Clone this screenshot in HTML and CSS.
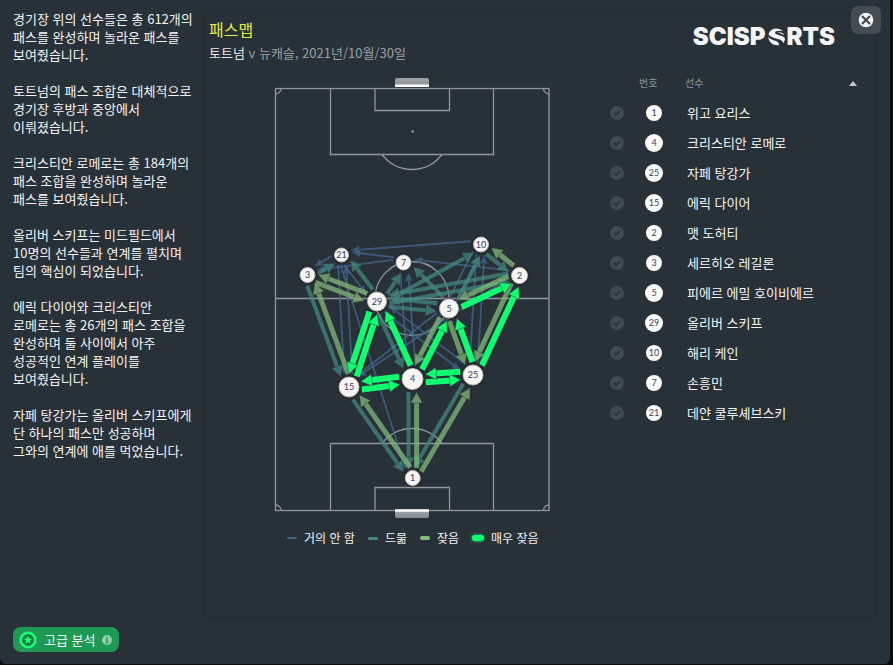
FILE: index.html
```
<!DOCTYPE html>
<html lang="ko">
<head>
<meta charset="UTF-8" />
<meta name="viewport" content="width=device-width, initial-scale=1.0" />
<title>패스맵</title>
<link rel="stylesheet" href="styles.css">
</head>
<body>
<div class="dialog">
    <aside class="sidebar">
        <div class="notes">
            <p>경기장 위의 선수들은 총 612개의<br>패스를 완성하며 놀라운 패스를<br>보여줬습니다.</p>
            <p>토트넘의 패스 조합은 대체적으로<br>경기장 후방과 중앙에서<br>이뤄졌습니다.</p>
            <p>크리스티안 로메로는 총 184개의<br>패스 조합을 완성하며 놀라운<br>패스를 보여줬습니다.</p>
            <p>올리버 스키프는 미드필드에서<br>10명의 선수들과 연계를 펼치며<br>팀의 핵심이 되었습니다.</p>
            <p>에릭 다이어와 크리스티안<br>로메로는 총 26개의 패스 조합을<br>완성하며 둘 사이에서 아주<br>성공적인 연계 플레이를<br>보여줬습니다.</p>
            <p>자페 탕강가는 올리버 스키프에게<br>단 하나의 패스만 성공하며<br>그와의 연계에 애를 먹었습니다.</p>
        </div>
        <button class="analysis" type="button">
            <svg width="18" height="18" viewBox="0 0 18 18">
                <circle cx="9" cy="9" r="7.3" fill="#16803f" stroke="#1cff7c" stroke-width="2.4"/>
                <path d="M9 4.8l1.1 2.8 3 .2-2.3 1.9.8 2.9L9 11l-2.600 1.600.8-2.900-2.300-1.900 3-.2z" fill="#1cff7c"/>
            </svg>
            <span>고급 분석</span>
            <svg width="10" height="10" viewBox="0 0 10 10">
                <circle cx="5" cy="5" r="5" fill="#8fcea8"/>
                <path d="M5 1.8v1.4M4 4.5h1v3M3.7 7.7h2.7" fill="none" stroke="#22985a" stroke-width="1.3"/>
            </svg>
        </button>
    </aside>

    <main class="panel">
        <section class="map">
            <h1>패스맵</h1>
            <p class="match"><strong>토트넘</strong> v 뉴캐슬, 2021년/10월/30일</p>
            <svg class="pitch" width="290" height="450" viewBox="270 72 290 450">
                <defs>
                    <linearGradient id="goal" x1="0" y1="0" x2="0" y2="1">
                        <stop offset="0" stop-color="#a0a6a8"/>
                        <stop offset="1" stop-color="#858c8f"/>
                    </linearGradient>
                </defs>
                <path d="M395 87v-7q0-2 2-2h30q2 0 2 2v7z" fill="url(#goal)"/>
                <path d="M395 510v6q0 2 2 2h30q2 0 2-2v-6z" fill="url(#goal)"/>
                <g class="lines">
                    <rect x="275.5" y="88.5" width="273.5" height="422"/>
                    <path d="M275.5 298.5H549"/>
                    <path d="M330.5 88.5V154.5H493.5V88.5M375 88.5V110.5H449.5V88.5"/>
                    <path d="M330.5 510.5V443.5H493.5V510.5M375 510.5V487.5H449.5V510.5"/>
                    <path d="M382 154.5a37.5 37.5 0 0 0 60 0M382 443.5a37.5 37.5 0 0 1 60 0"/>
                    <path d="M281 88.5a5.5 5.5 0 0 1-5.5 5.5M543.5 88.5a5.5 5.5 0 0 0 5.5 5.5M275.5 505a5.5 5.5 0 0 1 5.5 5.5M549 505a5.5 5.5 0 0 0-5.5 5.5"/>
                    <circle cx="412" cy="298.5" r="37"/>
                </g>
                <circle cx="412.5" cy="131.5" r="1.2" fill="#9ba2a6"/>
                <path d="M395 85.7h34M395 510.5h34" stroke="#fff" stroke-width="2.5"/>
                <g id="links"></g>
                <g id="nodes"></g>
            </svg>
            <ul class="legend">
                <li><i class="key seldom"></i>거의 안 함</li>
                <li><i class="key rare"></i>드묾</li>
                <li><i class="key often"></i>잦음</li>
                <li><i class="key very"></i>매우 잦음</li>
            </ul>
        </section>

        <section class="squad">
            <div class="logo">SCISP<svg width="21" height="20" viewBox="0 0 20 20">
                <path d="M2 7Q4 1.500 10 1.500q4 0 6.500 2.500Q9 3 8.500 5.500C8 8.500 18.500 8 18.500 12q0 2-2 4.500.5-3-5-4.500Q3 10 2 7z" fill="#f3f5f6"/>
                <path d="M1.500 9.500q1.500 2.500 6.500 4 5 1.500 4.500 4.700Q3 19 1.500 9.500zM11 5.300q5-.5 7 3.200-3-1.700-7-3.200z" fill="#f3f5f6"/>
            </svg>RTS</div>
            <table>
                <thead>
                    <tr><th class="pick"></th><th class="num">번호</th><th>선수</th><th class="sort"><svg width="8" height="5" viewBox="0 0 8 5"><path d="M0 5l4-5 4 5z" fill="#c3c8ca"/></svg></th></tr>
                </thead>
                <tbody id="players"></tbody>
            </table>
        </section>
    </main>

    <button class="close" type="button" aria-label="닫기">
        <svg width="16" height="16" viewBox="0 0 16 16">
            <circle cx="8" cy="8" r="7.3" fill="#f1f3f4"/>
            <path d="M4 4l8 8M12 4l-8 8" stroke="#3c4449" stroke-width="2"/>
        </svg>
    </button>
</div>
<script src="script.js"></script>
</body>
</html>
```
FILE: styles.css
```
* {
    box-sizing: border-box;
}
body {
    margin: 0;
    padding: 0 3px 1px 0;
    min-height: 100vh;
    display: flex;
    background: #0b0d10;
    color: #f3f5f6;
    font-family: "Noto Sans CJK KR", sans-serif;
    font-size: 13px;
    font-weight: 400;
    line-height: 18px;
}
h1, p, ul {
    margin: 0;
    padding: 0;
}
button {
    border: none;
    color: inherit;
    font: inherit;
    cursor: pointer;
}
.dialog {
    position: relative;
    flex: 1;
    display: flex;
    padding: 10px 13px 12px 0;
    background: #293138;
    border-radius: 0 0 6px 6px;
}
.sidebar {
    width: 202px;
    padding-left: 13px;
    display: flex;
    flex-direction: column;
    justify-content: space-between;
    align-items: flex-start;
    white-space: nowrap;
}
.notes {
    display: flex;
    flex-direction: column;
    gap: 18px;
}
.analysis {
    display: flex;
    align-items: center;
    gap: 7px;
    height: 25px;
    padding: 0 7px 0 6px;
    border-radius: 8px;
    background: #1f9a54;
}
.panel {
    flex: 1;
    display: flex;
    margin-bottom: 35px;
    padding: 6px;
    border: 1px solid #242b31;
    border-radius: 5px;
}
.map {
    flex: 1;
    display: flex;
    flex-direction: column;
}
h1 {
    font-size: 16px;
    line-height: 24px;
    font-weight: 400;
    color: #e3f04a;
}
.match {
    line-height: 24px;
    color: #989fa3;
}
.match strong {
    font-weight: 400;
    color: #e8ebec;
}
.pitch {
    display: block;
    margin: 7px 0 0 61px;
}
.lines {
    fill: none;
    stroke: #90979c;
    stroke-width: 1.3;
}
.link {
    opacity: 0.75;
}
.link.seldom {
    stroke: #426890;
    fill: #426890;
}
.link.rare {
    stroke: #42877f;
    fill: #42877f;
}
.link.often {
    stroke: #80b878;
    fill: #80b878;
}
.link.very {
    stroke: #10ff70;
    fill: #10ff70;
    opacity: 1;
}
.link .head {
    stroke: #293138;
    stroke-opacity: 0.4;
    stroke-width: 1;
}
.node circle {
    fill: #f6f5f2;
    stroke: #c3c1bd;
    stroke-width: 1;
    filter: drop-shadow(0 0 1px #111);
}
.node text {
    fill: #35406a;
    font-family: Lato, sans-serif;
    font-size: 9px;
    font-weight: 400;
    text-anchor: middle;
}
.legend {
    display: flex;
    gap: 13px;
    margin: 7px 0 0 78px;
    list-style: none;
    font-size: 12px;
}
.legend li {
    display: flex;
    align-items: center;
    gap: 7px;
}
.key {
    width: 10px;
    height: 4px;
    border-radius: 2px;
}
.key.seldom {
    height: 2px;
    background: #3e6487;
}
.key.rare {
    height: 3px;
    background: #438a83;
}
.key.often {
    background: #84bd7c;
}
.key.very {
    width: 12px;
    height: 6px;
    border-radius: 3px;
    background: #10ff70;
    box-shadow: 0 0 3px #10ff70;
}
.squad {
    width: 262px;
}
.logo {
    display: flex;
    justify-content: flex-end;
    align-items: center;
    height: 40px;
    padding-right: 35px;
    color: #f3f5f6;
    font-family: Inter, sans-serif;
    font-size: 24px;
    font-weight: 900;
}
table {
    width: 100%;
    margin-top: 11px;
    border-collapse: collapse;
}
th, td {
    height: 30px;
    padding: 0;
    text-align: left;
    font-weight: 400;
}
th {
    color: #8f979b;
    font-size: 10px;
}
.pick {
    width: 27px;
}
.num {
    width: 50px;
    padding-left: 4px;
}
td + td + td {
    padding-left: 2px;
}
.sort {
    width: 21px;
}
.sort svg {
    display: block;
}
td input {
    appearance: none;
    display: block;
    width: 14px;
    height: 14px;
    margin: 0 0 0 2px;
    border-radius: 50%;
    background: #414a50;
}
td label {
    position: relative;
    display: block;
}
td label svg {
    position: absolute;
    left: 5px;
    top: 4px;
}
.ball {
    display: flex;
    justify-content: center;
    align-items: center;
    width: 16px;
    height: 16px;
    margin-left: 11px;
    border-radius: 50%;
    background: #fbfbf8;
    color: #35406a;
    font-family: Lato, sans-serif;
    font-size: 9px;
}
.ball.big {
    width: 18px;
    height: 18px;
    margin-left: 10px;
}
.close {
    position: absolute;
    top: 6px;
    right: 9px;
    display: flex;
    justify-content: center;
    align-items: center;
    width: 30px;
    height: 28px;
    padding: 0;
    border-radius: 7px;
    background: #454d52;
}
```
FILE: script.js
```
// number: [x, y, radius, name]
const players = {
    1: [412.7, 478, 8, "위고 요리스"],
    4: [412.5, 379, 11, "크리스티안 로메로"],
    25: [473, 375, 10.5, "자페 탕강가"],
    15: [349, 387, 10.5, "에릭 다이어"],
    2: [519.5, 275.5, 8.5, "맷 도허티"],
    3: [307.5, 275, 8, "세르히오 레길론"],
    5: [449, 308.5, 10, "피에르 에밀 호이비에르"],
    29: [377, 301.5, 10, "올리버 스키프"],
    10: [481, 244.5, 8, "해리 케인"],
    7: [403.5, 262.5, 8, "손흥민"],
    21: [341.5, 255, 7.5, "데얀 쿨루셰브스키"]
};
const order = [1, 4, 25, 15, 2, 3, 5, 29, 10, 7, 21];

const passes = {
    seldom: "10-21 7-21 7-3 21-3 21-15 15-21 10-25 25-10 4-7 7-4 25-29 5-15 21-1 2-15 2-7 29-25 4-10 10-4 21-29",
    rare: "3-15 15-1 4-1 25-1 29-4 29-7 5-7 29-10 5-10 10-2 2-29 29-5 5-29 29-21 29-2 3-21",
    often: "1-4 1-15 1-25 15-3 3-29 29-3 5-4 5-25 2-5 2-10 2-25",
    very: "15-4 4-15 4-25 25-4 15-29 29-15 4-29 4-5 25-5 5-2 25-2"
};
const widths = { seldom: 1.8, rare: 4, often: 5, very: 6 };

// Each arrow runs to the right of the line between the two players
function arrow(from, to, type) {
    const [x1, y1, r1] = players[from];
    const [x2, y2, r2] = players[to];
    const len = Math.hypot(x2 - x1, y2 - y1);
    const angle = Math.atan2(y2 - y1, x2 - x1) * 180 / Math.PI;
    const w = widths[type];
    const start = r1 + 2;
    const end = len - r2 - 2;
    const head = type === "seldom" ? 9 : 11;
    const half = type === "seldom" ? 4 : 6;
    return `<g class="link ${type}" transform="translate(${x1} ${y1}) rotate(${angle}) translate(0 4)">
        <path d="M${start} 0H${end - head + 2}" stroke-width="${w}"/>
        <path class="head" d="M${end} 0l${-head} ${half}v${-half * 2}z"/></g>`;
}

let links = "";
for (const type in passes) {
    passes[type].split(" ").forEach(pair => {
        const [from, to] = pair.split("-");
        links += arrow(from, to, type);
    });
}
document.getElementById("links").innerHTML = links;

document.getElementById("nodes").innerHTML = order.map(n => {
    const [x, y, r] = players[n];
    return `<g class="node"><circle cx="${x}" cy="${y}" r="${r - 0.5}"/><text x="${x}" y="${y + 3}">${n}</text></g>`;
}).join("");

document.getElementById("players").innerHTML = order.map(n => {
    const [, , r, name] = players[n];
    return `<tr>
        <td><label><input type="checkbox" aria-label="${name}"><svg width="8" height="6" viewBox="0 0 8 6"><path d="M1 3l2 2 4-4" fill="none" stroke="#293138" stroke-width="1.7"/></svg></label></td>
        <td><span class="ball ${r >= 10 ? "big" : ""}">${n}</span></td>
        <td colspan="2">${name}</td>
    </tr>`;
}).join("");
```
